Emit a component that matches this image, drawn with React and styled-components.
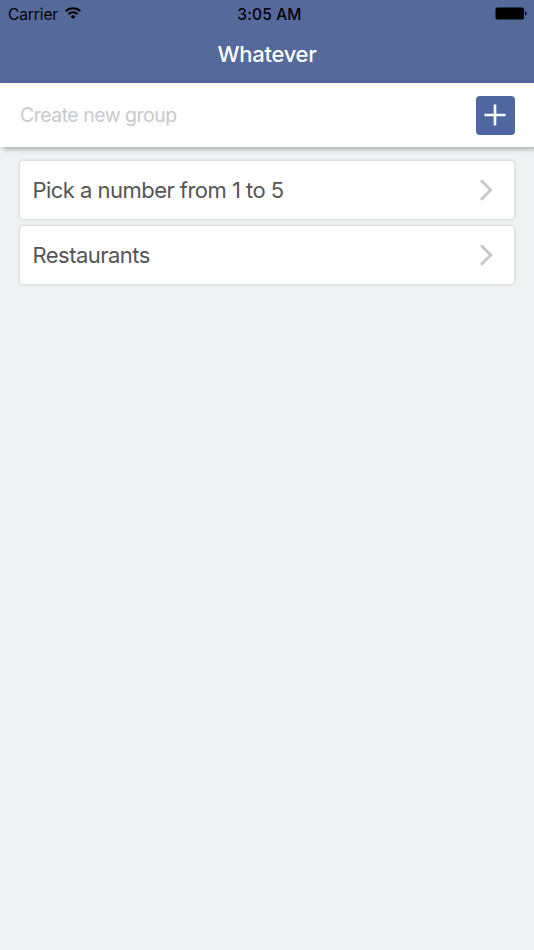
import React from "react";
import styled, { createGlobalStyle } from "styled-components";

const GlobalStyle = createGlobalStyle`
  * { box-sizing: border-box; }
  body {
    margin: 0;
    background: #f0f1f3;
    font-family: Inter, "Liberation Sans", sans-serif;
  }
`;

const Screen = styled.div`
  display: flex;
  flex-direction: column;
  height: 950px;
  overflow: hidden;
  background: #f0f1f3;
`;

const Header = styled.header`
  height: 83px;
  background: #56699b;
`;

const StatusBar = styled.div`
  display: grid;
  grid-template-columns: 1fr auto 1fr;
  align-items: center;
  height: 28px;
  padding: 0 7px 0 8px;
  color: #000;
  font-size: 15.5px;
  line-height: 29px;
`;

const Carrier = styled.div`
  display: flex;
  align-items: center;
  gap: 7px;
  letter-spacing: -0.1px;
`;

const WifiIcon = styled.svg`
  width: 16px;
  height: 12px;
  margin-top: -4px;
`;

const Clock = styled.div`
  margin-left: 4px;
  font-weight: 500;
  letter-spacing: 0.15px;
`;

const BatteryIcon = styled.svg`
  justify-self: end;
  width: 32px;
  height: 13px;
  margin-top: -2px;
`;

const Title = styled.h1`
  margin: 0;
  height: 55px;
  color: #fff;
  font-size: 22px;
  font-weight: 500;
  letter-spacing: -0.3px;
  line-height: 53px;
  text-align: center;
`;

const CreateBar = styled.form`
  display: flex;
  align-items: center;
  height: 64px;
  padding: 0 19.5px 0 20px;
  background: #fff;
  box-shadow: 3px 2px 5px rgba(0, 0, 0, 0.3);
`;

const GroupInput = styled.input`
  flex: 1;
  min-width: 0;
  height: 40px;
  padding: 0;
  border: 0;
  outline: 0;
  background: transparent;
  font-family: inherit;
  font-size: 19.5px;
  letter-spacing: -0.52px;
  &::placeholder { color: #c9c9ce; opacity: 1; }
`;

const AddButton = styled.button`
  display: grid;
  place-items: center;
  width: 39px;
  height: 39px;
  padding: 0;
  border: 0;
  border-radius: 4px;
  background: #4f67a0;
`;

const GroupList = styled.main`
  display: flex;
  flex-direction: column;
  gap: 6.5px;
  padding: 14px 20px;
`;

const GroupRow = styled.div`
  display: flex;
  align-items: center;
  justify-content: space-between;
  height: 58px;
  padding: 0 21px 0 12.5px;
  border-radius: 3px;
  background: #fff;
  box-shadow: 0 0 3px rgba(0, 0, 0, 0.23);
  color: #555;
  font-size: 22px;
`;

const GroupName = styled.span`
  letter-spacing: -0.53px;
`;

const groups = ["Pick a number from 1 to 5", "Restaurants"];

export default function App() {
  return (
    <Screen>
      <GlobalStyle />
      <Header>
        <StatusBar>
          <Carrier>
            <span>Carrier</span>
            <WifiIcon viewBox="0 0 16 12" fill="none" stroke="#000" strokeWidth="2">
              <path d="M.7 4.2a10.4 10.4 0 0 1 14.6 0" />
              <path d="M3.4 7.1a6.5 6.5 0 0 1 9.2 0" />
              <path d="M5.6 9.5a3.4 3.4 0 0 1 4.8 0L8 11.9z" fill="#000" stroke="none" />
            </WifiIcon>
          </Carrier>
          <Clock>3:05 AM</Clock>
          <BatteryIcon viewBox="0 0 32 13">
            <rect x=".5" y=".5" width="28.5" height="12" rx="1.7" />
            <path d="M30 4.3c2.2.8 2.2 3.6 0 4.4z" />
          </BatteryIcon>
        </StatusBar>
        <Title>Whatever</Title>
      </Header>
      <CreateBar onSubmit={(e) => e.preventDefault()}>
        <GroupInput placeholder="Create new group" />
        <AddButton aria-label="Create group">
          <svg width="22" height="22" viewBox="0 0 22 22" stroke="#fff" strokeWidth="2.6">
            <path d="M.5 11h21M11 .5v21" />
          </svg>
        </AddButton>
      </CreateBar>
      <GroupList>
        {groups.map((name) => (
          <GroupRow key={name}>
            <GroupName>{name}</GroupName>
            <svg width="14" height="22" viewBox="0 0 14 22" fill="none" stroke="#c8c8c8" strokeWidth="2.8">
              <path d="M2 1.2l9.8 9.8L2 20.8" />
            </svg>
          </GroupRow>
        ))}
      </GroupList>
    </Screen>
  );
}
